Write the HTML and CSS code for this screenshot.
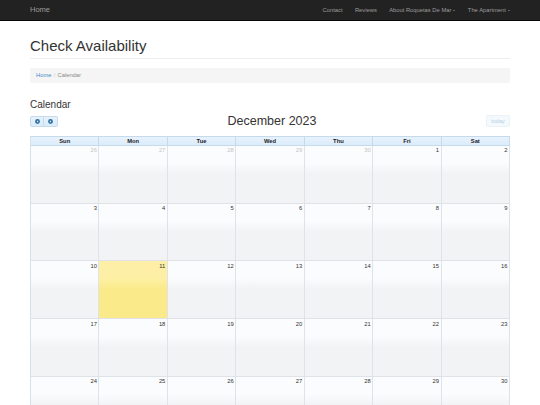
FILE: index.html
```html
<!DOCTYPE html>
<html>
<head>
<meta charset="utf-8">
<title>Check Availability</title>
<link rel="stylesheet" href="styles.css">
</head>
<body>
<nav class="navbar">
  <div class="container nav-inner">
    <a class="brand" href="#">Home</a>
    <ul class="nav">
      <li><a href="#">Contact</a></li>
      <li><a href="#">Reviews</a></li>
      <li><a href="#">About Roquetas De Mar <span class="caret"></span></a></li>
      <li><a href="#">The Apartment <span class="caret"></span></a></li>
    </ul>
  </div>
</nav>
<div class="container">
  <h1 class="page-header">Check Availability</h1>
  <ol class="breadcrumb">
    <li><a href="#">Home</a></li>
    <li class="sep">/</li>
    <li class="active">Calendar</li>
  </ol>
  <h3 class="section-title">Calendar</h3>
  <div class="fc-toolbar">
    <div class="fc-left">
      <span class="fc-btn fc-prev"><svg width="5" height="5" viewBox="0 0 5 5"><circle cx="2.5" cy="2.5" r="2.4" fill="#2e6e9e"/><polygon points="3.1,1.3 1.6,2.5 3.1,3.7" fill="#dfeffc"/></svg></span><span class="fc-btn fc-next"><svg width="5" height="5" viewBox="0 0 5 5"><circle cx="2.5" cy="2.5" r="2.4" fill="#2e6e9e"/><polygon points="1.9,1.3 3.4,2.5 1.9,3.7" fill="#dfeffc"/></svg></span>
    </div>
    <h2 class="fc-title">December 2023</h2>
    <div class="fc-right">
      <span class="fc-today">today</span>
    </div>
  </div>
  <div class="fc-grid">
    <div class="fc-head">Sun</div><div class="fc-head">Mon</div><div class="fc-head">Tue</div><div class="fc-head">Wed</div><div class="fc-head">Thu</div><div class="fc-head">Fri</div><div class="fc-head">Sat</div>

    <div class="fc-day other"><div class="num">26</div></div>
    <div class="fc-day other"><div class="num">27</div></div>
    <div class="fc-day other"><div class="num">28</div></div>
    <div class="fc-day other"><div class="num">29</div></div>
    <div class="fc-day other"><div class="num">30</div></div>
    <div class="fc-day"><div class="num">1</div></div>
    <div class="fc-day"><div class="num">2</div></div>

    <div class="fc-day"><div class="num">3</div></div>
    <div class="fc-day"><div class="num">4</div></div>
    <div class="fc-day"><div class="num">5</div></div>
    <div class="fc-day"><div class="num">6</div></div>
    <div class="fc-day"><div class="num">7</div></div>
    <div class="fc-day"><div class="num">8</div></div>
    <div class="fc-day"><div class="num">9</div></div>

    <div class="fc-day"><div class="num">10</div></div>
    <div class="fc-day today"><div class="num">11</div></div>
    <div class="fc-day"><div class="num">12</div></div>
    <div class="fc-day"><div class="num">13</div></div>
    <div class="fc-day"><div class="num">14</div></div>
    <div class="fc-day"><div class="num">15</div></div>
    <div class="fc-day"><div class="num">16</div></div>

    <div class="fc-day"><div class="num">17</div></div>
    <div class="fc-day"><div class="num">18</div></div>
    <div class="fc-day"><div class="num">19</div></div>
    <div class="fc-day"><div class="num">20</div></div>
    <div class="fc-day"><div class="num">21</div></div>
    <div class="fc-day"><div class="num">22</div></div>
    <div class="fc-day"><div class="num">23</div></div>

    <div class="fc-day"><div class="num">24</div></div>
    <div class="fc-day"><div class="num">25</div></div>
    <div class="fc-day"><div class="num">26</div></div>
    <div class="fc-day"><div class="num">27</div></div>
    <div class="fc-day"><div class="num">28</div></div>
    <div class="fc-day"><div class="num">29</div></div>
    <div class="fc-day"><div class="num">30</div></div>

    <div class="fc-day"><div class="num">31</div></div>
    <div class="fc-day other"><div class="num">1</div></div>
    <div class="fc-day other"><div class="num">2</div></div>
    <div class="fc-day other"><div class="num">3</div></div>
    <div class="fc-day other"><div class="num">4</div></div>
    <div class="fc-day other"><div class="num">5</div></div>
    <div class="fc-day other"><div class="num">6</div></div>
  </div>
</div>
</body>
</html>
```
FILE: styles.css
```css
* { box-sizing: border-box; }
html, body {
  margin: 0;
  padding: 0;
  background: #fff;
  color: #333;
  font-family: "Liberation Sans", Arial, sans-serif;
  font-size: 5.8px;
}
a { text-decoration: none; }
.container {
  width: 480px;
  margin: 0 auto;
}
.navbar {
  background: #222;
  border-bottom: 1px solid #080808;
  height: 21px;
}
.nav-inner {
  display: flex;
  justify-content: space-between;
  align-items: center;
  height: 20px;
}
.brand {
  color: #9d9d9d;
  font-size: 7.5px;
  line-height: 20px;
}
.nav {
  display: flex;
  list-style: none;
  margin: 0 -6.2px 0 0;
  padding: 0;
}
.nav a {
  display: block;
  color: #9d9d9d;
  padding: 0 6.2px;
  line-height: 20px;
  font-size: 5.8px;
}
.caret {
  display: inline-block;
  width: 0;
  height: 0;
  vertical-align: middle;
  border-top: 1.7px solid #9d9d9d;
  border-left: 1.7px solid transparent;
  border-right: 1.7px solid transparent;
  margin-left: 0.5px;
}
.page-header {
  font-size: 15px;
  font-weight: 500;
  line-height: 16.5px;
  margin: 17px 0 0;
  padding-bottom: 3.5px;
  border-bottom: 1px solid #eee;
}
.breadcrumb {
  display: flex;
  list-style: none;
  margin: 8.5px 0 0;
  padding: 3.5px 6px;
  background: #f5f5f5;
  border-radius: 1.7px;
  line-height: 8.3px;
}
.breadcrumb a { color: #428bca; }
.breadcrumb .sep { color: #ccc; padding: 0 2.2px; }
.breadcrumb .active { color: #888; }
.section-title {
  font-size: 10px;
  font-weight: 500;
  line-height: 11px;
  margin: 16.7px 0 4.5px;
}
.fc-toolbar {
  display: flex;
  align-items: flex-start;
  height: 12px;
  margin-bottom: 9px;
}
.fc-left, .fc-right { display: flex; }
.fc-title {
  flex: 1;
  margin: 0;
  text-align: center;
  font-size: 12.5px;
  font-weight: 500;
  line-height: 12px;
  position: relative;
  top: 0.5px;
}
.fc-btn {
  display: flex;
  align-items: center;
  justify-content: center;
  width: 14px;
  height: 11px;
  margin-top: 0.7px;
  background: linear-gradient(#e6f2fd, #dbebfa);
  border: 1px solid #c5dbec;
}
.fc-prev { border-radius: 2px 0 0 2px; }
.fc-next { border-radius: 0 2px 2px 0; border-left: 0; width: 14px; }
.fc-today {
  display: block;
  width: 24px;
  height: 12px;
  line-height: 10px;
  text-align: center;
  color: #2e6e9e;
  background: #dfeffc;
  border: 1px solid #c5dbec;
  border-radius: 2px;
  opacity: 0.35;
  font-size: 5.6px;
}
.fc-grid {
  display: grid;
  grid-template-columns: repeat(7, 1fr);
  grid-template-rows: 10px repeat(6, 57.75px);
  border-left: 1px solid #d7e1ea;
}
.fc-head {
  background: linear-gradient(#e7f2fd, #dcecfb);
  border-top: 1px solid #c5dbec;
  border-bottom: 1px solid #c5dbec;
  border-right: 1px solid #c5dbec;
  text-align: center;
  font-weight: bold;
  line-height: 8px;
  color: #222;
}
.fc-day {
  border-right: 1px solid #dfe3e8;
  border-bottom: 1px solid #dfe3e8;
  background: linear-gradient(#fbfcfd 0, #fbfcfd 17px, #f2f3f5 28px, #f2f3f5 100%);
}
.fc-day .num {
  text-align: right;
  padding: 1.5px 1.5px 0 0;
  line-height: 7px;
  color: #333;
}
.fc-day.other .num { color: #c4c4c4; }
.fc-day.today {
  background: linear-gradient(#fdf0a6 0, #fdf0a6 17px, #fbea8a 28px, #fbea8a 100%);
}
```
